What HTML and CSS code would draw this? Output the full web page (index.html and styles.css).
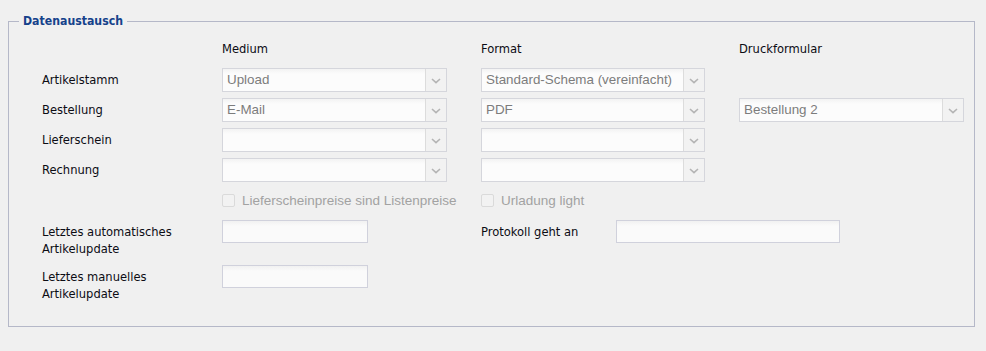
FILE: index.html
```html
<!DOCTYPE html>
<html lang="de">
<head>
  <meta charset="UTF-8" />
  <title>Datenaustausch</title>
  <link rel="stylesheet" href="styles.css">
</head>
<body>
  <div class="page">
    <fieldset class="box">
      <legend>Datenaustausch</legend>

      <div class="inner">
        <div class="grid">
          <div></div>
          <div class="head">Medium</div>
          <div class="head">Format</div>
          <div class="head">Druckformular</div>

          <div class="label">Artikelstamm</div>
          <div class="combo"><span class="value">Upload</span><span class="trigger"></span></div>
          <div class="combo narrow"><span class="value">Standard-Schema (vereinfacht)</span><span class="trigger"></span></div>
          <div></div>

          <div class="label">Bestellung</div>
          <div class="combo"><span class="value">E-Mail</span><span class="trigger"></span></div>
          <div class="combo narrow"><span class="value">PDF</span><span class="trigger"></span></div>
          <div class="combo"><span class="value">Bestellung 2</span><span class="trigger"></span></div>

          <div class="label">Lieferschein</div>
          <div class="combo"><span class="value"></span><span class="trigger"></span></div>
          <div class="combo narrow"><span class="value"></span><span class="trigger"></span></div>
          <div></div>

          <div class="label">Rechnung</div>
          <div class="combo"><span class="value"></span><span class="trigger"></span></div>
          <div class="combo narrow"><span class="value"></span><span class="trigger"></span></div>
          <div></div>

          <div></div>
          <label class="check"><span class="tick"></span>Lieferscheinpreise sind Listenpreise</label>
          <label class="check"><span class="tick"></span>Urladung light</label>
          <div></div>
        </div>

        <div class="dates">
          <div class="date-row">
            <div class="label two">Letztes automatisches<br>Artikelupdate</div>
            <div class="field short"></div>
            <div class="proto">
              <div class="label">Protokoll geht an</div>
              <div class="field long"></div>
            </div>
          </div>
          <div class="date-row">
            <div class="label two">Letztes manuelles<br>Artikelupdate</div>
            <div class="field short"></div>
          </div>
        </div>
      </div>
    </fieldset>
  </div>
</body>
</html>
```

FILE: styles.css
```css
body {
  margin: 0;
  background: #f0f0f0;
  font-family: "DejaVu Sans Condensed", "DejaVu Sans", sans-serif;
  font-size: 12.8px;
  color: #0c0c14;
}

.page {
  padding: 14px 11px 0 8px;
}

.box {
  margin: 0;
  padding: 0;
  border: 1px solid #b5b8c8;
  min-width: 0;
}

.box legend {
  margin-left: 10px;
  padding: 0 4px;
  line-height: 15px;
  font-size: 12.2px;
  font-weight: bold;
  color: #15428b;
}

.inner {
  padding: 12px 0 24px 33px;
}

.grid {
  display: grid;
  grid-template-columns: 180px 259px 258px 225px;
  grid-template-rows: 21px repeat(5, 24px);
  row-gap: 6px;
}

.head {
  line-height: 15px;
}

.label {
  line-height: 24px;
}

.combo {
  display: flex;
  width: 225px;
  height: 24px;
  box-sizing: border-box;
  border: 1px solid #d5d6dc;
  background: #fff;
}

.combo.narrow {
  width: 224px;
}

.value {
  flex: 1;
  padding-left: 4px;
  font-family: "Liberation Sans", Arial, sans-serif;
  font-size: 13.4px;
  line-height: 22px;
  color: #7c7c7c;
  background: linear-gradient(#f3f3f3, #fcfcfc 5px, #fcfcfc);
  white-space: nowrap;
  overflow: hidden;
}

.trigger {
  width: 20px;
  border-left: 1px solid #dcdcdc;
  background: #f2f2f2 url("data:image/svg+xml;utf8,<svg xmlns='http://www.w3.org/2000/svg' width='10' height='6'><path d='M1 1 L5 4.6 L9 1' fill='none' stroke='%23b4b4b4' stroke-width='1.6'/></svg>") no-repeat center 9px;
}

.check {
  display: flex;
  align-items: center;
  gap: 7px;
  font-family: "Liberation Sans", Arial, sans-serif;
  font-size: 13.5px;
  color: #a2a2a2;
}

.tick {
  width: 11px;
  height: 11px;
  border: 1px solid #dadada;
  border-radius: 2px;
  background: #f2f2f2;
}

.dates {
  display: flex;
  flex-direction: column;
  gap: 8px;
  margin-top: 8px;
}

.date-row {
  display: flex;
  align-items: flex-start;
}

.label.two {
  width: 180px;
  padding-top: 3px;
  line-height: 17px;
}

.field {
  height: 23px;
  box-sizing: border-box;
  border: 1px solid #d0d1dc;
  background: linear-gradient(#f1f1f1, #fafafa 5px, #fafafa);
}

.field.short {
  width: 146px;
}

.field.long {
  width: 224px;
}

.proto {
  display: flex;
  margin-left: 113px;
}

.proto .label {
  width: 135px;
  line-height: 23px;
}
```
